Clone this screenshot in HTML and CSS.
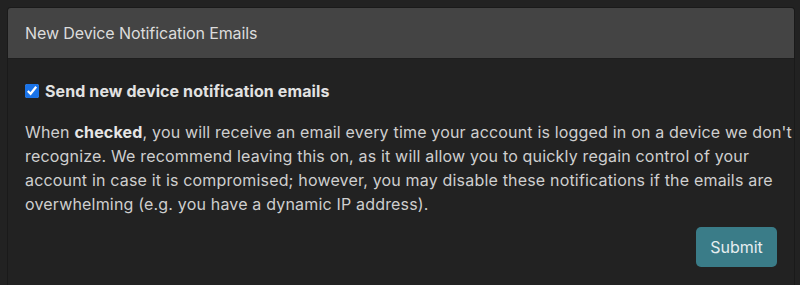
FILE: index.html
```html
<!DOCTYPE html>
<html>
<head>
<meta charset="utf-8">
<link rel="stylesheet" href="styles.css">
</head>
<body>
<div class="card">
  <div class="card-header">New Device Notification Emails</div>
  <div class="card-body">
    <label class="check">
      <input type="checkbox" checked>
      <span>Send new device notification emails</span>
    </label>
    <p class="desc">When <b>checked</b>, you will receive an email every time your account is logged in on a device we don't recognize. We recommend leaving this on, as it will allow you to quickly regain control of your account in case it is compromised; however, you may disable these notifications if the emails are overwhelming (e.g. you have a dynamic IP address).</p>
    <div class="actions">
      <button class="btn">Submit</button>
    </div>
  </div>
</div>
</body>
</html>
```

FILE: styles.css
```css
html, body {
  margin: 0;
  padding: 0;
  background: #222222;
}
body {
  padding: 7px 5px 0 7px;
  font-family: Inter, "Liberation Sans", sans-serif;
  color: #d6d6d6;
  -webkit-font-smoothing: antialiased;
}
.card {
  border: 1px solid #1a1a1a;
  border-bottom: none;
  border-radius: 4px 4px 0 0;
  background: #222222;
  height: 300px;
}
.card-header {
  background: #444444;
  border-bottom: 1px solid #1e1e1e;
  height: 51px;
  box-sizing: border-box;
  padding: 0 17px;
  display: flex;
  align-items: center;
  font-size: 16px;
  letter-spacing: -0.1px;
  color: #dcdcdc;
  border-radius: 3px 3px 0 0;
}
.card-body {
  padding: 22px 17px 0 17px;
}
.check {
  display: flex;
  align-items: center;
  gap: 6px;
  font-weight: 700;
  font-size: 16px;
  letter-spacing: 0.1px;
  color: #e2e2e2;
}
.check input {
  width: 14px;
  height: 14px;
  margin: 0;
  accent-color: #1a73e8;
}
.desc {
  margin: 19px -18px 0 0;
  font-size: 16px;
  letter-spacing: 0.18px;
  line-height: 24px;
  color: #cfcfcf;
}
.desc b {
  color: #e6e6e6;
}
.actions {
  display: flex;
  justify-content: flex-end;
  margin-top: 11px;
}
.btn {
  width: 81px;
  height: 40px;
  border: none;
  border-radius: 5px;
  background: #3a7c88;
  color: #e6eef0;
  font-family: inherit;
  font-size: 16px;
}
```
